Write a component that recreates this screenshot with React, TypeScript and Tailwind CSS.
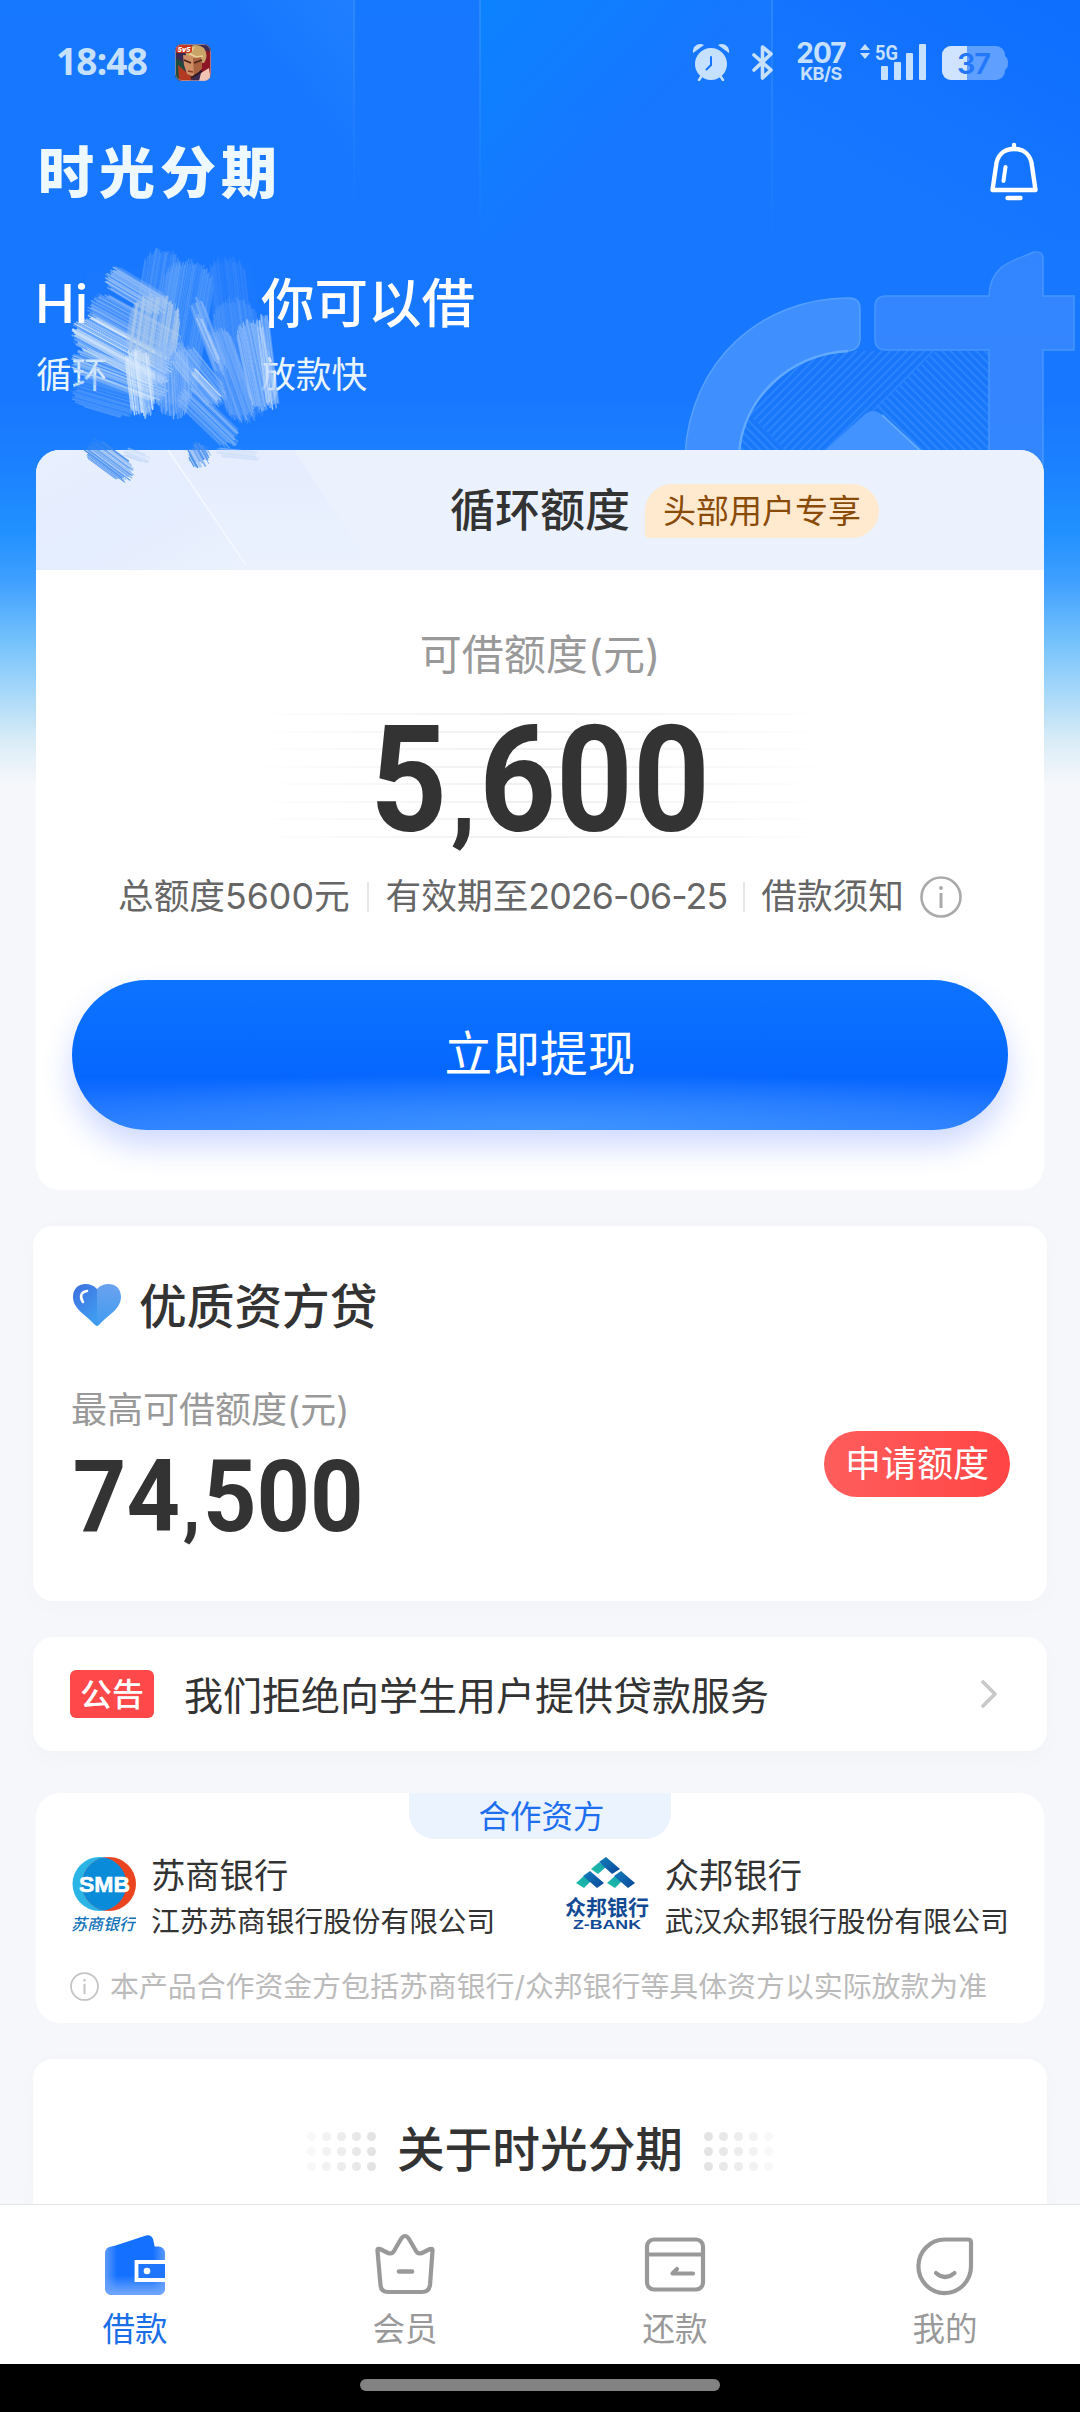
import type { ReactNode } from 'react'

type Brush = {
  from: [number, number]
  to: [number, number]
  width: number
  color: string
  alpha: number
}

type Partner = {
  name: string
  company: string
  logo: ReactNode
}

const brushes: Brush[] = [
  { from: [165, 250], to: [150, 340], width: 36, color: '#5ea0fb', alpha: 0.6 },
  { from: [192, 262], to: [168, 405], width: 50, color: '#6aa9fb', alpha: 0.65 },
  { from: [225, 258], to: [238, 380], width: 36, color: '#4a93fb', alpha: 0.5 },
  { from: [232, 300], to: [248, 420], width: 44, color: '#5c9ffb', alpha: 0.55 },
  { from: [108, 274], to: [165, 308], width: 24, color: '#a9cbf8', alpha: 0.9 },
  { from: [92, 303], to: [178, 350], width: 30, color: '#93bef8', alpha: 0.8 },
  { from: [195, 300], to: [222, 372], width: 14, color: '#9cc4fa', alpha: 0.6 },
  { from: [76, 326], to: [168, 376], width: 34, color: '#dbeafb', alpha: 0.95 },
  { from: [158, 296], to: [148, 365], width: 50, color: '#adcbed', alpha: 0.9 },
  { from: [74, 358], to: [165, 392], width: 26, color: '#bcd8fa', alpha: 0.85 },
  { from: [74, 388], to: [135, 406], width: 30, color: '#6aaafc', alpha: 0.6 },
  { from: [136, 350], to: [144, 416], width: 24, color: '#dcecfc', alpha: 0.95 },
  { from: [170, 340], to: [174, 416], width: 32, color: '#8fbcfa', alpha: 0.75 },
  { from: [178, 350], to: [220, 402], width: 26, color: '#a9ccfa', alpha: 0.7 },
  { from: [214, 330], to: [245, 418], width: 28, color: '#8dbbfa', alpha: 0.6 },
  { from: [248, 322], to: [266, 408], width: 28, color: '#9cc4fb', alpha: 0.75 },
  { from: [262, 316], to: [273, 406], width: 12, color: '#d8e8fd', alpha: 0.8 },
  { from: [182, 392], to: [234, 442], width: 24, color: '#8dbcfa', alpha: 0.85 },
  { from: [192, 370], to: [220, 400], width: 6, color: '#dbe9fc', alpha: 0.95 },
  { from: [198, 316], to: [218, 362], width: 5, color: '#c6dcfc', alpha: 0.9 },
]

const cardBrushes: Brush[] = [
  { from: [88, 445], to: [130, 476], width: 22, color: '#3f8bf0', alpha: 1 },
  { from: [194, 446], to: [204, 464], width: 22, color: '#4b91f1', alpha: 1 },
  { from: [124, 451], to: [148, 460], width: 8, color: '#b9d2f7', alpha: 0.7 },
  { from: [218, 452], to: [258, 456], width: 8, color: '#c4d9f9', alpha: 0.6 },
]

const noise = (n: number) => {
  const v = Math.sin(n * 127.1 + 11.7) * 43758.5453
  return v - Math.floor(v)
}

function BrushStroke({ brush, seed }: { brush: Brush; seed: number }) {
  const [x1, y1] = brush.from
  const [x2, y2] = brush.to
  const length = Math.hypot(x2 - x1, y2 - y1)
  const dx = (x2 - x1) / length
  const dy = (y2 - y1) / length
  const count = Math.round(brush.width / 0.9)

  return (
    <g stroke={brush.color}>
      {Array.from({ length: count }, (_, i) => {
        const k = seed * 71 + i
        const t = (i / (count - 1)) * 2 - 1
        const offset = (t * brush.width) / 2
        const round = (1 - Math.sqrt(1 - t * t * 0.95)) * brush.width * 0.5
        const a = round + (noise(k) - 0.5) * 7
        const b = round + (noise(k + 500) - 0.5) * 8
        return (
          <line
            key={i}
            x1={x1 + dx * a - dy * offset}
            y1={y1 + dy * a + dx * offset}
            x2={x2 - dx * b - dy * offset}
            y2={y2 - dy * b + dx * offset}
            strokeWidth={0.6 + noise(k + 900) * 1.1}
            opacity={brush.alpha * (0.3 + noise(k + 300) * 0.7)}
          />
        )
      })}
    </g>
  )
}

function Scribble() {
  return (
    <svg
      className="pointer-events-none absolute left-0 top-0"
      width="540"
      height="500"
      viewBox="0 0 540 500"
    >
      {/* hides what lies under the strokes */}
      <path
        d="M86 272 L250 262 L262 330 L266 400 L225 425 L160 412 L106 402 L106 345 L84 322 Z"
        fill="#1f7afe"
        opacity="0.35"
      />
      {brushes.map((brush, i) => (
        <BrushStroke key={i} brush={brush} seed={i + 1} />
      ))}
      {cardBrushes.map((brush, i) => (
        <BrushStroke key={i} brush={brush} seed={i + 40} />
      ))}
    </svg>
  )
}

function HeroArt() {
  return (
    <svg
      className="absolute left-0 top-0"
      width="1080"
      height="800"
      viewBox="0 0 1080 800"
      fill="none"
    >
      <defs>
        <linearGradient id="line" x1="0" y1="0" x2="0" y2="1">
          <stop offset="0" stopColor="#4a9dff" stopOpacity="0.45" />
          <stop offset="1" stopColor="#4a9dff" stopOpacity="0" />
        </linearGradient>
        <linearGradient id="panel" gradientUnits="userSpaceOnUse" x1="500" y1="0" x2="640" y2="130">
          <stop offset="0" stopColor="#0a84ff" stopOpacity="0.8" />
          <stop offset="1" stopColor="#0a84ff" stopOpacity="0" />
        </linearGradient>
        <linearGradient id="corner" gradientUnits="userSpaceOnUse" x1="1080" y1="0" x2="960" y2="220">
          <stop offset="0" stopColor="#0868ff" stopOpacity="0.6" />
          <stop offset="1" stopColor="#0868ff" stopOpacity="0" />
        </linearGradient>
        <linearGradient id="soft" gradientUnits="userSpaceOnUse" x1="353" y1="0" x2="270" y2="70">
          <stop offset="0" stopColor="#2a86ff" stopOpacity="0.5" />
          <stop offset="1" stopColor="#2a86ff" stopOpacity="0" />
        </linearGradient>
        <clipPath id="inner">
          <path d="M739 455 A108 108 0 0 1 846 351 H989 V455 Z" />
        </clipPath>
        <clipPath id="hatchA">
          <path d="M740 340 H946 L826 458 H793 L748 413 Z" />
        </clipPath>
        <clipPath id="hatchB">
          <path d="M936 351 H989 V455 H925 L873 408 Z" />
        </clipPath>
        <clipPath id="hatchC">
          <path d="M748 413 L793 458 H730 Z" />
        </clipPath>
      </defs>
      <rect x="480" y="0" width="291" height="240" fill="url(#panel)" />
      <rect x="771" y="0" width="309" height="240" fill="url(#corner)" />
      <rect x="150" y="0" width="203" height="200" fill="url(#soft)" />
      <rect x="353" y="0" width="2" height="210" fill="url(#line)" />
      <rect x="479" y="0" width="2" height="240" fill="url(#line)" />
      <rect x="771" y="0" width="2" height="240" fill="url(#line)" />

      <g clipPath="url(#inner)">
        <rect x="730" y="350" width="260" height="105" fill="#1a76f5" opacity="0.6" />
        <g stroke="#3089ff" strokeWidth="2" opacity="0.8">
          <g clipPath="url(#hatchA)">
            {Array.from({ length: 19 }, (_, i) => (
              <line key={i} x1={786 + i * 8.5} y1="345" x2={671 + i * 8.5} y2="460" />
            ))}
          </g>
          <g clipPath="url(#hatchB)">
            {Array.from({ length: 22 }, (_, i) => (
              <line key={i} x1={800 + i * 8.5} y1="345" x2={915 + i * 8.5} y2="460" />
            ))}
          </g>
          <g clipPath="url(#hatchC)">
            {Array.from({ length: 8 }, (_, i) => (
              <line key={i} x1={630 + i * 8.5} y1="345" x2={745 + i * 8.5} y2="460" />
            ))}
          </g>
        </g>
      </g>
      <path
        d="M685 455 C690 362 760 298 849 298 Q860 298 860 309 V338 Q860 350 848 351 C790 354 742 398 739 455 Z"
        fill="#3f8fff"
        stroke="#55a0ff"
        strokeWidth="1.5"
      />
      <path
        d="M739 455 C742 398 790 354 848 351"
        stroke="#62aaff"
        strokeWidth="2.5"
      />
      <path
        d="M886 296 H989 C990 262 1018 260 1034 252 Q1043 251 1043 258 V296 H1074 V350 H1043 V480 H989 V350 H886 Q875 350 875 339 V307 Q875 296 886 296 Z"
        fill="#3988ff"
        stroke="#4f9bff"
        strokeWidth="1.5"
        opacity="0.85"
      />
      <path d="M820 455 L864 415 Q873 407 882 415 L925 455 Z" fill="#4292ff" />
      <path d="M882 415 L925 455" stroke="#62aaff" strokeWidth="1.8" />
    </svg>
  )
}

function GameIcon() {
  return (
    <svg width="36" height="37" viewBox="0 0 36 37">
      <clipPath id="game">
        <rect width="36" height="37" rx="7" />
      </clipPath>
      <g clipPath="url(#game)">
        <rect width="36" height="37" fill="#3a2a52" />
        <path d="M22 4 L36 8 V30 L27 34 Z" fill="#8d1626" />
        <path d="M0 14 L8 18 L12 37 H0 Z" fill="#1f4a3c" />
        <path d="M3 21 L10 27 L18 34 L14 37 H4 Z" fill="#b23a22" />
        <path d="M10 6 Q20 -3 29 4 Q34 12 29 19 L12 16 Z" fill="#c9a468" />
        <path d="M8 11 L26 13 L27 24 L19 33 L12 30 L9 21 Z" fill="#cf8f66" />
        <path d="M18 14 L26 13 L27 24 L19 33 Z" fill="#a9623f" />
        <path d="M9 16 L16 19 M19 19 L27 16" stroke="#4c2418" strokeWidth="1.8" />
        <path d="M13 27 L18 28" stroke="#8b3527" strokeWidth="1.5" />
        <path d="M19 3 L15 10 L21 13 L28 12" stroke="#ecd29a" strokeWidth="1.5" fill="none" />
        <path d="M26 29 L34 24 L36 37 H24 Z" fill="#f1c4b4" />
        <path d="M16 34 L27 27" stroke="#2b1a22" strokeWidth="2" />
        <rect x="1" y="1" width="16" height="8" rx="2" fill="#c8361e" />
        <text
          x="9"
          y="8"
          textAnchor="middle"
          fontFamily="Roboto, sans-serif"
          fontSize="8"
          fontWeight="900"
          fontStyle="italic"
          fill="#fff"
        >
          5v5
        </text>
        <rect x=".5" y=".5" width="35" height="36" rx="6.5" fill="none" stroke="#c9b3c0" strokeOpacity=".6" />
      </g>
    </svg>
  )
}

function StatusBar() {
  return (
    <div className="flex h-[124px] items-center pl-[56px] pr-[71px] text-[#c6e0ff]">
      <span className="-mt-[3px] w-[119px] font-['Noto_Sans'] text-[37px] font-bold leading-none tracking-[-0.8px]">
        18:48
      </span>
      <GameIcon />
      <div className="ml-auto flex items-center">
        {/* Alarm */}
        <svg width="38" height="38" viewBox="0 0 38 38" fill="currentColor">
          <circle cx="19" cy="21" r="16" />
          <path d="M1 10 C0 4 6 -1 12 2 Z" />
          <path d="M37 10 C38 4 32 -1 26 2 Z" />
          <path d="M9 34 L7 37 M29 34 L31 37" stroke="currentColor" strokeWidth="2.5" strokeLinecap="round" />
          <path d="M19 14 V22 L14.5 26.5" fill="none" stroke="#1774ff" strokeWidth="2" strokeLinecap="round" />
        </svg>
        <svg className="ml-[21px]" width="23" height="38" viewBox="0 0 23 38" fill="none" stroke="currentColor" strokeWidth="3.6" strokeLinecap="round" strokeLinejoin="round">
          <path d="M3 12 L20 27 L11.5 35 V4 L20 11 L3 27" />
        </svg>
        <div className="ml-[22px] flex w-[50px] flex-col items-center pt-[1px] font-['Inter'] font-bold">
          <span className="text-[28px] leading-[21px] tracking-[-1px]">207</span>
          <span className="mt-[1px] text-[18px] leading-[17px] tracking-[-0.5px]">KB/S</span>
        </div>
        <svg className="ml-[13px] overflow-visible" width="68" height="38" viewBox="0 0 68 38" fill="currentColor">
          <path d="M6 1 L11 7 H1 Z M6 16 L1 10 H11 Z" />
          <text x="16" y="17" fontFamily="Roboto, sans-serif" fontSize="21" fontWeight="700" textLength="23" lengthAdjust="spacingAndGlyphs">
            5G
          </text>
          <rect x="22" y="23" width="7" height="14" rx="1" />
          <rect x="35" y="19" width="7" height="18" rx="1" />
          <rect x="47" y="10" width="7" height="27" rx="1" />
          <rect x="60" y="1" width="7" height="36" rx="1" />
        </svg>
        <svg className="ml-[15px] mt-[2px]" width="67" height="34" viewBox="0 0 67 34">
          <clipPath id="batt">
            <rect width="63" height="34" rx="9" />
          </clipPath>
          <path d="M62 9 Q63 10 65 12 Q67 17 65 22 Q63 24 62 25 Z" fill="#5f9fff" />
          <g clipPath="url(#batt)">
            <rect width="63" height="34" fill="#5f9fff" />
            <rect width="25" height="34" fill="#d0e3ff" />
          </g>
          <text x="32" y="28" textAnchor="middle" fontFamily="Inter, sans-serif" fontSize="29" fontWeight="600" fill="#2277fb" textLength="34">
            37
          </text>
        </svg>
      </div>
    </div>
  )
}

function Header() {
  return (
    <div className="flex h-[96px] items-center justify-between pl-[38px] pr-[40px]">
      <h1 className="-mt-[7px] font-['Noto_Sans_CJK_SC'] text-[56px] font-black leading-none tracking-[5px] text-[#eef8ff]">
        时光分期
      </h1>
      <svg width="52" height="60" viewBox="0 0 52 60" fill="none" stroke="#fff" strokeWidth="4.4" strokeLinecap="round" strokeLinejoin="round">
        <path d="M26 3 V7" />
        <path d="M26 7 C15 7 9 14 8 24 L4.5 48 H47.500 L44 24 C43 14 37 7 26 7 Z" />
        <path d="M17.500 25 L15.500 39" strokeWidth="4" />
        <path d="M19.500 56 H32.500" />
      </svg>
    </div>
  )
}

function InfoIcon({ size, color }: { size: number; color: string }) {
  return (
    <svg className="shrink-0" width={size} height={size} viewBox="0 0 42 42" fill="none" stroke={color}>
      <circle cx="21" cy="21" r="19.500" strokeWidth="2.600" />
      <path d="M21 17 V32" strokeWidth="3" />
      <circle cx="21" cy="12" r="1.900" fill={color} stroke="none" />
    </svg>
  )
}

function CreditCard() {
  return (
    <section className="relative mx-[36px] h-[740px] overflow-hidden rounded-[24px] bg-white">
      <div className="relative flex h-[120px] items-center bg-[#ebf2fe] pl-[414px]">
        <svg className="absolute left-0 top-0" width="400" height="120" viewBox="0 0 400 120">
          <defs>
            <linearGradient id="shine" x1="0" y1="0" x2="1" y2="1">
              <stop offset="0" stopColor="#e9f0ff" />
              <stop offset=".5" stopColor="#e4edfe" />
              <stop offset="1" stopColor="#ebf2fe" />
            </linearGradient>
            <linearGradient id="shine2" x1="0" y1="0" x2="0" y2="1">
              <stop offset="0" stopColor="#e5edfe" />
              <stop offset="1" stopColor="#ebf2fe" />
            </linearGradient>
          </defs>
          <path d="M0 0 H132 L212 120 H0 Z" fill="url(#shine)" />
          <path d="M132 0 H258 L338 120 H212 Z" fill="url(#shine2)" />
          <path d="M132 0 L210 115" stroke="#f5f9ff" strokeWidth="1.500" />
        </svg>
        <h2 className="relative text-[45px] font-medium leading-none text-[#333]">
          循环额度
        </h2>
        <span className="relative ml-[15px] mt-[2px] flex h-[54px] w-[234px] items-center justify-center rounded-[27px] rounded-bl-[4px] bg-[#ffe9cf] text-[33px] leading-none text-[#8a4b08]">
          头部用户专享
        </span>
      </div>

      <div className="flex flex-col items-center">
        <p className="mt-[64px] text-[42px] leading-[42px] text-[#999]">可借额度(元)</p>
        <div className="relative mt-[37px] flex h-[126px] w-[580px] flex-col items-center">
          <div className="flex w-full flex-col gap-[15.500px]">
            {Array.from({ length: 8 }, (_, i) => (
              <div
                key={i}
                className="h-[2px] w-full bg-gradient-to-r from-transparent via-[#efeff2] to-transparent"
              />
            ))}
          </div>
          <p className="absolute inset-x-0 top-[2px] flex h-[132px] scale-x-[0.905] items-baseline justify-center font-['Roboto'] text-[148px] font-bold leading-[132px] text-[#333]">
            5<span className="mx-[4px] text-[112px]">,</span>600
          </p>
        </div>
        <div className="mt-[37px] flex h-[42px] items-center text-[35.700px] leading-none text-[#666]">
          <span>总额度5600元</span>
          <i className="mx-[17px] h-[30px] w-[2px] bg-[#e6e6e6]" />
          <span>
            有效期至<span className="tracking-[-0.9px]">2026-06-25</span>
          </span>
          <i className="mx-[16px] h-[30px] w-[2px] bg-[#e6e6e6]" />
          <span className="mr-[16px]">借款须知</span>
          <InfoIcon size={42} color="#aaa" />
        </div>
        <button className="relative mt-[62px] flex h-[150px] w-[936px] items-center justify-center rounded-full bg-gradient-to-b from-[#0d73ff] via-[#0667ff] via-65% to-[#2a7cff] text-[47.700px] leading-none text-white shadow-[0_16px_30px_rgba(30,80,255,0.22)]">
          <span className="absolute inset-0 rounded-full bg-[radial-gradient(ellipse_65%_38%_at_50%_100%,rgba(64,152,255,0.85),transparent)]" />
          <span className="relative">立即提现</span>
        </button>
      </div>
    </section>
  )
}

function LoanCard() {
  return (
    <section className="mx-[33px] mt-[36px] h-[375px] rounded-[20px] bg-white px-[38px] pt-[57px] shadow-[0_4px_24px_rgba(0,0,0,0.02)]">
      <div className="flex h-[50px] items-center">
        <svg className="-mt-[6px] ml-[1px]" width="50" height="46" viewBox="0 0 50 46">
          <defs>
            <linearGradient id="heartL" x1="0" y1="0" x2=".6" y2="1">
              <stop offset="0" stopColor="#3f6fe0" />
              <stop offset="1" stopColor="#3f9bf0" />
            </linearGradient>
            <linearGradient id="heartR" x1="0" y1="0" x2="0" y2="1">
              <stop offset="0" stopColor="#6ba2ef" />
              <stop offset="1" stopColor="#3f9bf0" />
            </linearGradient>
          </defs>
          <path d="M25 7 C18 -1 1 0 1 15 C1 27 15 34 22 42 Q24 44 25 44 Z" fill="url(#heartL)" />
          <path d="M25 7 C32 -1 49 0 49 15 C49 27 35 34 28 42 Q26 44 25 44 Z" fill="url(#heartR)" />
          <path d="M15 9 C8 10 8 16 11 20" fill="none" stroke="#fff" strokeWidth="2.600" strokeLinecap="round" />
        </svg>
        <h2 className="ml-[17px] text-[47.700px] font-medium leading-none text-[#333]">优质资方贷</h2>
      </div>
      <div className="flex justify-between">
        <div>
          <p className="mt-[59px] text-[36px] leading-[36px] text-[#999]">最高可借额度(元)</p>
          <p className="mt-[19px] flex origin-left scale-x-[0.925] items-baseline pl-[2px] font-['Roboto'] text-[101px] font-bold leading-[100px] text-[#333]">
            74<span className="mx-[3px] text-[76px] leading-none">,</span>500
          </p>
        </div>
        <button className="mr-[-1px] mt-[98px] flex h-[66px] w-[186px] items-center justify-center rounded-full bg-gradient-to-r from-[#ff5d5d] to-[#ff4444] text-[36px] leading-none text-white">
          申请额度
        </button>
      </div>
    </section>
  )
}

function Notice() {
  return (
    <section className="mx-[33px] mt-[36px] flex h-[114px] items-center rounded-[20px] bg-white pl-[37px] pr-[50px] shadow-[0_8px_24px_rgba(0,0,0,0.02)]">
      <span className="flex h-[48px] w-[84px] items-center justify-center rounded-[6px] bg-[#ff4849] pt-[1px] text-[32px] font-medium leading-none text-white">
        公告
      </span>
      <span className="ml-[30px] mt-[2px] text-[39px] leading-none text-[#333]">
        我们拒绝向学生用户提供贷款服务
      </span>
      <svg className="ml-auto" width="16" height="28" viewBox="0 0 16 28" fill="none" stroke="#c8c8c8" strokeWidth="3.600" strokeLinecap="round" strokeLinejoin="round">
        <path d="M2 2 L14 14 L2 26" />
      </svg>
    </section>
  )
}

const partners: Partner[] = [
  {
    name: '苏商银行',
    company: '江苏苏商银行股份有限公司',
    logo: (
      <svg width="66" height="78" viewBox="0 0 66 78">
        <clipPath id="smb">
          <circle cx="29.500" cy="27" r="27" />
        </clipPath>
        <circle cx="29.500" cy="27" r="27" fill="#2bb5e6" />
        <circle cx="39" cy="27" r="27" fill="#ea4420" />
        <circle cx="39" cy="27" r="27" fill="#0a8bd9" clipPath="url(#smb)" />
        <text x="34.500" y="35" textAnchor="middle" fontFamily="Liberation Sans, sans-serif" fontSize="22" fontWeight="700" fill="#fff" stroke="#fff" strokeWidth=".6" textLength="51" lengthAdjust="spacingAndGlyphs">
          SMB
        </text>
        <text x="33" y="73" textAnchor="middle" fontFamily="Noto Sans CJK SC, sans-serif" fontSize="16" fontStyle="italic" fontWeight="500" fill="#1273b8" textLength="64">
          苏商银行
        </text>
      </svg>
    ),
  },
  {
    name: '众邦银行',
    company: '武汉众邦银行股份有限公司',
    logo: (
      <svg width="86" height="76" viewBox="0 0 86 76">
        <defs>
          <linearGradient id="teal" x1="0" y1="1" x2="1" y2="0">
            <stop offset="0" stopColor="#1fc3a5" />
            <stop offset="1" stopColor="#159fae" />
          </linearGradient>
          <linearGradient id="navy" x1="0" y1="0" x2="1" y2="1">
            <stop offset="0" stopColor="#1480bb" />
            <stop offset="1" stopColor="#0b459a" />
          </linearGradient>
        </defs>
        <path d="M27 12 L35 5.500 L42 10 L34 17 Z" fill="url(#teal)" />
        <path d="M35 5 L42 0 L56 12 L48 17 Z" fill="url(#navy)" />
        <path d="M12 26 L20 19 L27 24 L20 31 Z" fill="url(#teal)" />
        <path d="M19 19 L26 14 L40 26 L33 31 Z" fill="url(#navy)" />
        <path d="M43 26 L51 19 L58 24 L51 31 Z" fill="url(#teal)" />
        <path d="M50 19 L57 14 L71 26 L64 31 Z" fill="url(#navy)" />
        <text x="43" y="58" textAnchor="middle" fontFamily="Noto Sans CJK SC, sans-serif" fontSize="21" fontWeight="700" fill="#134a94">
          众邦银行
        </text>
        <text x="43" y="72" textAnchor="middle" fontFamily="Liberation Sans, sans-serif" fontSize="13" fontWeight="700" fill="#134a94" textLength="68" lengthAdjust="spacingAndGlyphs">
          Z-BANK
        </text>
      </svg>
    ),
  },
]

function Partners() {
  return (
    <section className="mx-[36px] mt-[42px] h-[230px] rounded-[24px] bg-white">
      <div className="mx-auto flex h-[46px] w-[262px] items-center justify-center rounded-b-[26px] bg-[#ebf3fe] pl-[3px] pt-[2px] text-[31.500px] leading-none text-[#1e6ef0]">
        合作资方
      </div>
      <div className="flex justify-between pl-[34px] pr-[35px] pt-[18px]">
        {partners.map((partner) => (
          <div key={partner.name} className="flex gap-[15px]">
            {partner.logo}
            <div className="text-[#333]">
              <p className="mt-[2px] text-[34.300px] leading-[34px]">{partner.name}</p>
              <p className="mt-[14px] text-[28.700px] leading-[29px]">{partner.company}</p>
            </div>
          </div>
        ))}
      </div>
      <div className="mt-[36px] flex items-center gap-[11px] pl-[34px] text-[28.900px] leading-[29px] text-[#bbb]">
        <InfoIcon size={29} color="#c4c4c4" />
        <span>本产品合作资金方包括苏商银行/众邦银行等具体资方以实际放款为准</span>
      </div>
    </section>
  )
}

function Dots({ flip = false }: { flip?: boolean }) {
  return (
    <div className={`grid grid-cols-5 gap-[6px] ${flip ? '-scale-x-100' : ''}`}>
      {Array.from({ length: 15 }, (_, i) => (
        <i
          key={i}
          className="size-[9px] rounded-full bg-[#e2e2e2]"
          style={{ opacity: 0.25 + (i % 5) * 0.18 }}
        />
      ))}
    </div>
  )
}

function About() {
  return (
    <section className="mx-[33px] mt-[36px] flex h-[145px] items-center justify-center rounded-t-[20px] bg-white pt-[39px] shadow-[0_4px_24px_rgba(0,0,0,0.02)]">
      <Dots />
      <h2 className="mx-[21px] text-[47.700px] font-medium leading-none text-[#333]">关于时光分期</h2>
      <Dots flip />
    </section>
  )
}

const tabs = [
  {
    label: '借款',
    icon: (
      <svg width="62" height="62" viewBox="0 0 62 62">
        <defs>
          <linearGradient id="walletX" x1="0" y1="0" x2="1" y2="0">
            <stop offset="0" stopColor="#5e9bfd" />
            <stop offset=".2" stopColor="#1471ff" />
            <stop offset=".8" stopColor="#1471ff" />
            <stop offset="1" stopColor="#5c99fc" />
          </linearGradient>
          <linearGradient id="walletY" x1="0" y1="0" x2="0" y2="1">
            <stop offset=".6" stopColor="#6ba3fd" stopOpacity="0" />
            <stop offset=".95" stopColor="#6ba3fd" />
          </linearGradient>
        </defs>
        <path d="M7 13 L42 1.500 Q47 0 49 5 L51 14 Z" fill="#1471ff" />
        <rect x="1" y="12.500" width="60" height="48.500" rx="6.500" fill="url(#walletX)" />
        <rect x="1" y="12.500" width="60" height="48.500" rx="6.500" fill="url(#walletY)" />
        <path d="M61 28 H32.500 V46 H61" fill="#1f76fd" stroke="#fff" strokeWidth="3.800" />
        <circle cx="43" cy="37" r="3.300" fill="#fff" />
      </svg>
    ),
  },
  {
    label: '会员',
    icon: (
      <svg width="62" height="62" viewBox="0 0 62 62" fill="none" stroke="#999" strokeWidth="4.200" strokeLinecap="round" strokeLinejoin="round">
        <path d="M3.500 17 Q3 14 6 15 L14 19 Q18 20.500 20 17 L27 5 Q31 -1 35 5 L42 17 Q44 20.500 48 19 L56 15 Q59 14 58.500 17 L56 51 Q55 58 48 58 H14 Q7 58 6.500 51 Z" />
        <path d="M25 37.500 H38" strokeWidth="4.600" />
      </svg>
    ),
  },
  {
    label: '还款',
    icon: (
      <svg width="62" height="62" viewBox="0 0 62 62" fill="none" stroke="#999" strokeWidth="4.200" strokeLinecap="round" strokeLinejoin="round">
        <rect x="3" y="5.500" width="56" height="50" rx="7" />
        <path d="M4 20.500 H58" />
        <path d="M49 39.500 H28.500 L33 35" />
      </svg>
    ),
  },
  {
    label: '我的',
    icon: (
      <svg width="62" height="62" viewBox="0 0 62 62" fill="none" stroke="#999" strokeWidth="4.200" strokeLinecap="round" strokeLinejoin="round">
        <path d="M31 5.500 H54 Q57 5.500 57 8.500 V32 A26.300 26.800 0 1 1 31 5.500 Z" />
        <path d="M22 39 Q31 47 40.500 39" />
      </svg>
    ),
  },
]

function TabBar() {
  return (
    <nav className="relative grid h-[160px] grid-cols-4 border-t border-[#e2e4e8] bg-white">
      {tabs.map((tab, i) => (
        <div
          key={tab.label}
          className={`flex flex-col items-center pt-[29px] ${i === 0 ? 'text-[#1a6fe8]' : 'text-[#999]'}`}
        >
          {tab.icon}
          <span className="mt-[17px] text-[32.500px] leading-[33px]">{tab.label}</span>
        </div>
      ))}
    </nav>
  )
}

export default function App() {
  return (
    <div className="relative flex h-[2412px] w-[1080px] flex-col overflow-hidden bg-[#f5f7fa] font-['Inter','Noto_Sans_CJK_SC',sans-serif]">
      <div className="absolute inset-x-0 top-0 h-[800px] bg-[linear-gradient(180deg,#1677ff_0px,#1877ff_400px,#1b80ff_460px,#2090ff_530px,#3f9fff_580px,#73c1fb_640px,#a9d9f9_695px,#d8ecf7_740px,#f5f7fa_782px)]" />
      <HeroArt />
      <div className="relative flex h-[450px] shrink-0 flex-col text-white">
        <StatusBar />
        <Header />
        <div className="mt-[57px] flex h-[54px] items-center pl-[35px] text-[53.500px] font-medium leading-none">
          <span className="w-[226px]">Hi</span>
          <span>你可以借</span>
        </div>
        <div className="mt-[27px] flex h-[36px] items-center pl-[36px] text-[35.800px] leading-none text-[#e8f5ff]">
          <span className="w-[224px]">循环</span>
          <span>放款快</span>
        </div>
      </div>
      <div className="relative flex-1">
        <CreditCard />
        <LoanCard />
        <Notice />
        <Partners />
        <About />
      </div>
      <Scribble />
      <TabBar />
      <div className="relative flex h-[48px] items-start justify-center bg-black pt-[15px]">
        <div className="h-[12px] w-[360px] rounded-full bg-[#828282]" />
      </div>
    </div>
  )
}
